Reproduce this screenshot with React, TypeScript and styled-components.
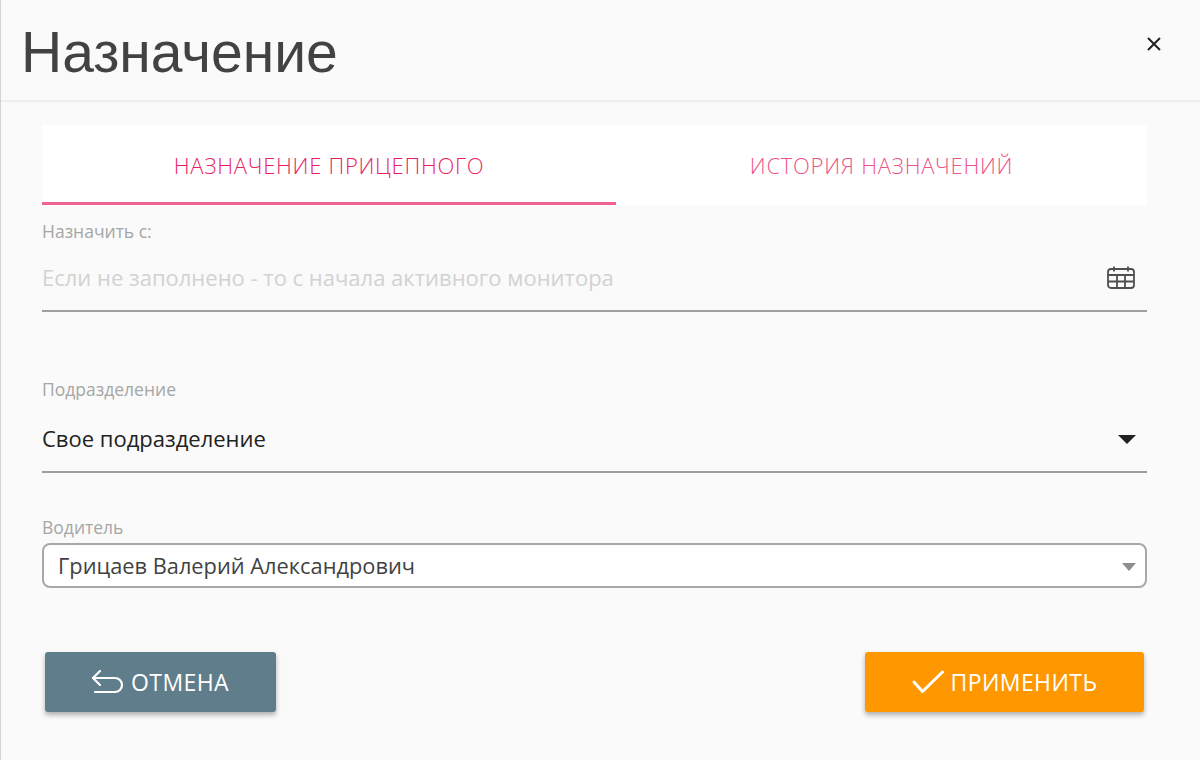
import { createGlobalStyle, styled } from 'styled-components'

const Global = createGlobalStyle`
  html, body {
    margin: 0;
    padding: 0;
    height: 100%;
    background: #fafafa;
    overflow: hidden;
  }
  * { box-sizing: border-box; }
`

const Dialog = styled.div`
  width: 1200px;
  height: 760px;
  background: #fafafa;
  border-left: 1px solid #d4d4d4;
  font-family: 'Open Sans', 'Noto Sans', sans-serif;
`

const Header = styled.header`
  height: 102px;
  display: flex;
  align-items: center;
  justify-content: space-between;
  padding: 0 38px 0 20px;
  border-bottom: 2px solid #eeeeee;
`

const Title = styled.h1`
  margin: 4px 0 0;
  font-family: 'Liberation Sans', Arial, sans-serif;
  font-weight: 400;
  font-size: 57px;
  line-height: 70px;
  color: #424242;
`

const CloseButton = styled.button`
  width: 16px;
  height: 16px;
  margin-bottom: 12px;
  padding: 0;
  border: 0;
  background: none;
  display: flex;
  color: #212121;
`

const Body = styled.main`
  padding: 23px 53px 0 41px;
`

const Tabs = styled.div`
  display: grid;
  grid-template-columns: 574px 531px;
  height: 80px;
  background: #ffffff;
`

const Tab = styled.div<{ $active?: boolean }>`
  display: flex;
  align-items: center;
  justify-content: center;
  padding-top: 2px;
  font-size: 22px;
  font-weight: 300;
  letter-spacing: 0.72px;
  color: ${p => (p.$active ? '#e91e63' : '#ec5588')};
  border-bottom: 3px solid ${p => (p.$active ? '#f06292' : 'transparent')};
`

const Label = styled.div<{ $top: number }>`
  margin-top: ${p => p.$top}px;
  font-size: 17.5px;
  line-height: 22px;
  color: #a6a6a6;
`

const LineInput = styled.div<{ $top: number; $placeholder?: boolean }>`
  height: 66px;
  margin-top: ${p => p.$top}px;
  padding-bottom: 2px;
  display: flex;
  align-items: center;
  justify-content: space-between;
  border-bottom: 2px solid #9e9e9e;
  font-size: 22px;
  color: ${p => (p.$placeholder ? '#d2d2d2' : '#212121')};
`

const CalendarIcon = styled.svg`
  width: 28px;
  height: 24px;
  margin: 2px 12px 0 0;
  color: #4f4f4f;
`

const CaretBlack = styled.span`
  width: 0;
  height: 0;
  margin: 2px 11px 0 0;
  border-left: 9px solid transparent;
  border-right: 9px solid transparent;
  border-top: 9px solid #212121;
`

const SelectBox = styled.div`
  height: 45px;
  margin-top: 5px;
  display: flex;
  align-items: center;
  justify-content: space-between;
  padding: 0 9px 0 14px;
  background: #ffffff;
  border: 2px solid #a8a8a8;
  border-radius: 8px;
  font-size: 21.8px;
  color: #424242;
`

const CaretGray = styled.span`
  width: 0;
  height: 0;
  margin-top: 2px;
  border-left: 7px solid transparent;
  border-right: 7px solid transparent;
  border-top: 8px solid #8e8e8e;
`

const Actions = styled.div`
  display: flex;
  justify-content: space-between;
  margin-top: 64px;
  padding: 0 3px;
`

const ActionButton = styled.button<{ $bg: string; $width: number }>`
  width: ${p => p.$width}px;
  height: 60px;
  display: flex;
  align-items: center;
  justify-content: center;
  gap: 7px;
  border: 0;
  border-radius: 3px;
  background: ${p => p.$bg};
  color: #ffffff;
  font-family: inherit;
  font-size: 23px;
  letter-spacing: 0.4px;
  box-shadow: 0 3px 5px rgba(0, 0, 0, 0.3);
`

export default function App() {
  return (
    <Dialog>
      <Global />
      <Header>
        <Title>Назначение</Title>
        <CloseButton>
          <svg viewBox="0 0 16 16" width="16" height="16">
            <path d="M2 2l12 12M14 2L2 14" stroke="currentColor" strokeWidth="2" fill="none" />
          </svg>
        </CloseButton>
      </Header>
      <Body>
        <Tabs>
          <Tab $active>НАЗНАЧЕНИЕ ПРИЦЕПНОГО</Tab>
          <Tab>ИСТОРИЯ НАЗНАЧЕНИЙ</Tab>
        </Tabs>
        <Label $top={15}>Назначить с:</Label>
        <LineInput $top={4} $placeholder>
          Если не заполнено - то с начала активного монитора
          <CalendarIcon viewBox="0 0 28 24" fill="none" stroke="currentColor" strokeWidth="1.8">
            <rect x="1" y="3" width="26" height="19" rx="3" />
            <path d="M1 9h26M1 15.5h26M10 9v13M18 9v13M7 0.5v5M21 0.5v5" />
          </CalendarIcon>
        </LineInput>
        <Label $top={66}>Подразделение</Label>
        <LineInput $top={7}>
          Свое подразделение
          <CaretBlack />
        </LineInput>
        <Label $top={43}>Водитель</Label>
        <SelectBox>
          Грицаев Валерий Александрович
          <CaretGray />
        </SelectBox>
        <Actions>
          <ActionButton $bg="#607d8b" $width={231}>
            <svg viewBox="0 0 32 24" width="32" height="24" fill="none" stroke="currentColor" strokeWidth="2.2" strokeLinecap="round" strokeLinejoin="round">
              <path d="M8 1L1 8l7 7" />
              <path d="M1 8h22a7 7 0 0 1 0 14H3" />
            </svg>
            ОТМЕНА
          </ActionButton>
          <ActionButton $bg="#ff9800" $width={279}>
            <svg viewBox="0 0 32 24" width="32" height="24" fill="none" stroke="currentColor" strokeWidth="3" strokeLinecap="round" strokeLinejoin="round">
              <path d="M2 12l8.5 9.5L30.5 2" />
            </svg>
            ПРИМЕНИТЬ
          </ActionButton>
        </Actions>
      </Body>
    </Dialog>
  )
}
